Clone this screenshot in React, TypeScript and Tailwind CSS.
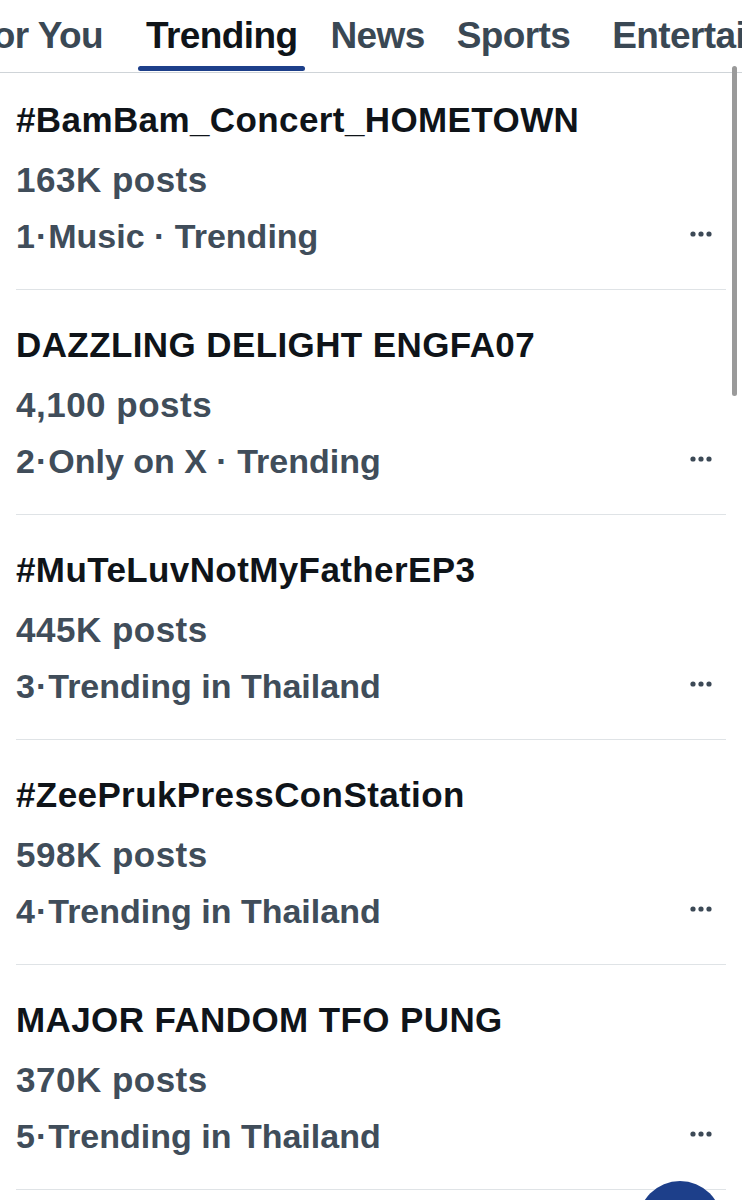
import React from "react";

const trends = [
  { title: "#BamBam_Concert_HOMETOWN", posts: "163K posts", rank: "1", meta: "Music · Trending" },
  { title: "DAZZLING DELIGHT ENGFA07", posts: "4,100 posts", rank: "2", meta: "Only on X · Trending" },
  { title: "#MuTeLuvNotMyFatherEP3", posts: "445K posts", rank: "3", meta: "Trending in Thailand" },
  { title: "#ZeePrukPressConStation", posts: "598K posts", rank: "4", meta: "Trending in Thailand" },
  { title: "MAJOR FANDOM TFO PUNG", posts: "370K posts", rank: "5", meta: "Trending in Thailand" },
];

function Dots() {
  return (
    <svg width="22" height="6" viewBox="0 0 22 6" className="text-[#3c4956]">
      <circle cx="3" cy="3" r="2.6" fill="currentColor" />
      <circle cx="11" cy="3" r="2.6" fill="currentColor" />
      <circle cx="19" cy="3" r="2.6" fill="currentColor" />
    </svg>
  );
}

export default function App() {
  return (
    <div className="relative w-[742px] h-[1200px] overflow-hidden bg-white font-['Liberation_Sans',Arial,sans-serif]">
      {/* Tabs */}
      <nav className="h-[73px] border-b border-[#cfd4d8] overflow-hidden">
        <div className="flex h-full font-bold text-[37px] tracking-[-0.6px] text-[#3a4854] whitespace-nowrap">
          <div className="flex items-center justify-end w-[103px] shrink-0">For You</div>
          <div className="relative flex items-center shrink-0 ml-[35px] px-[8px] text-[#0f1419]">
            Trending
            <div className="absolute left-0 right-0 bottom-[1px] h-[5px] rounded-full bg-[#1d3f8a]" />
          </div>
          <div className="flex items-center shrink-0 ml-[25px]">News</div>
          <div className="flex items-center shrink-0 ml-[32px]">Sports</div>
          <div className="flex items-center shrink-0 ml-[42px]">Entertainment</div>
        </div>
      </nav>

      {/* List */}
      <div className="pl-[16px] pr-[16px]">
        {trends.map((t, i) => (
          <div
            key={t.title}
            className={`relative flex flex-col border-b border-[#dfe3e6] ${i === 0 ? "pt-[27px] h-[217px]" : "pt-[35px] h-[225px]"}`}
          >
            <div className="text-[35px] leading-[40px] font-bold text-[#0f1419] tracking-[0.4px]">{t.title}</div>
            <div className="mt-[20px] text-[35px] leading-[40px] font-bold text-[#404d5a] tracking-[0.5px]">{t.posts}</div>
            <div className="mt-[16px] flex items-center text-[34px] leading-[40px] font-bold text-[#404d5a]">
              <span>{t.rank}</span>
              <span className="mx-[1px]">·</span>
              <span>{t.meta}</span>
            </div>
            <div className="absolute right-[14px] top-[calc(100%-58px)]">
              <Dots />
            </div>
          </div>
        ))}
      </div>

      {/* Scrollbar */}
      <div className="absolute right-[5px] top-[66px] w-[5px] h-[330px] rounded-full bg-[#9a9a9a]" />

      {/* Floating button */}
      <div className="absolute left-[638px] top-[1181px] w-[84px] h-[84px] rounded-full bg-[#1d3f8a]" />
    </div>
  );
}
